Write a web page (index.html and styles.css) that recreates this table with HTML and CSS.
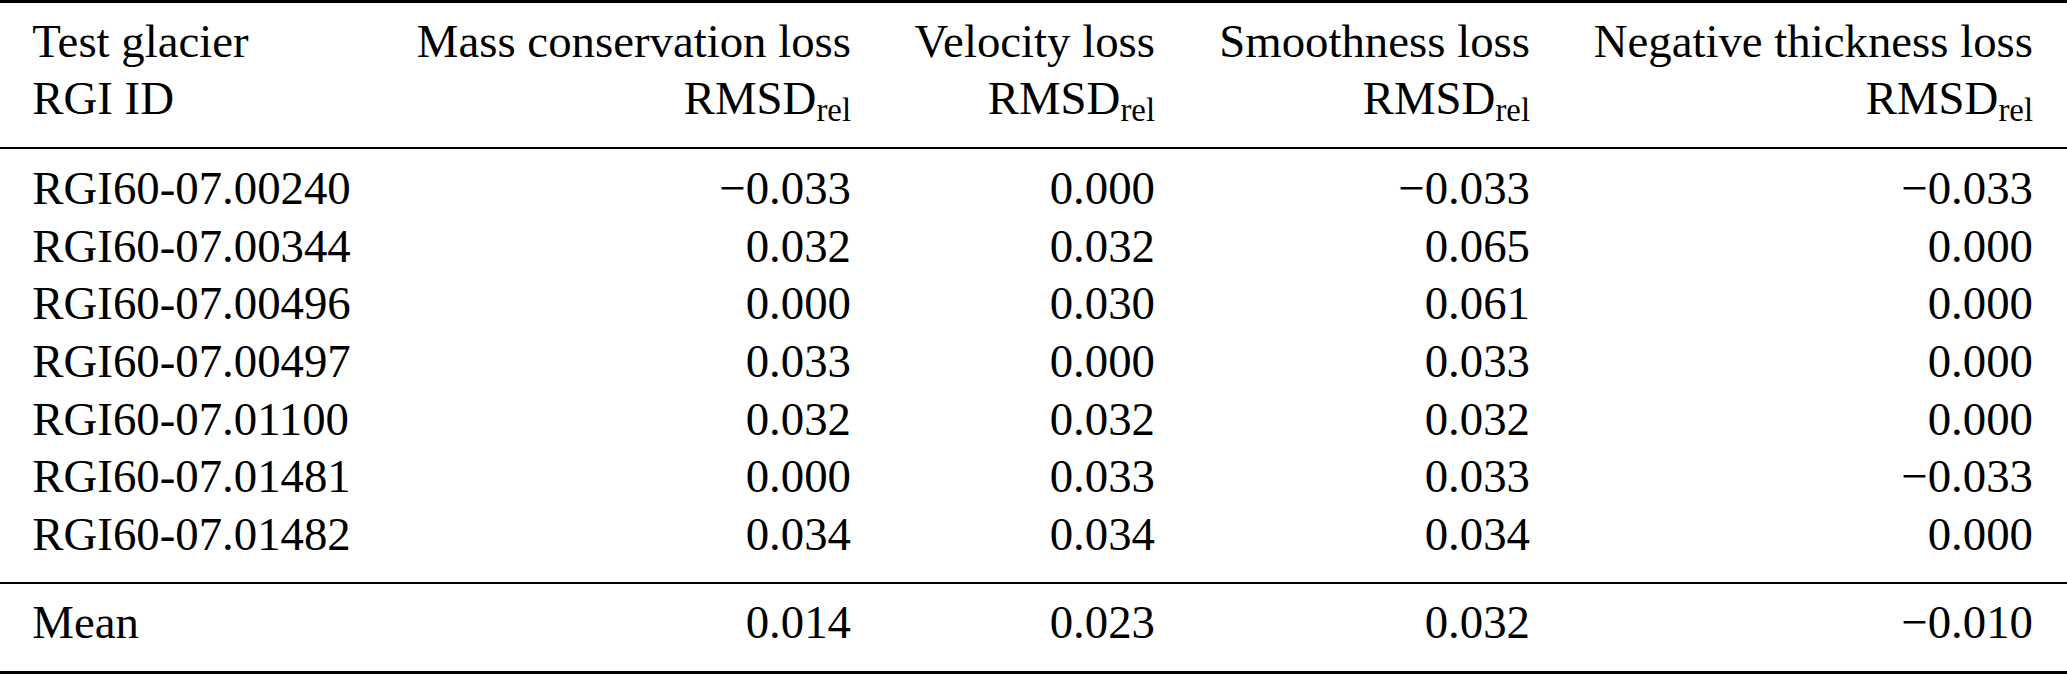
FILE: index.html
```html
<!DOCTYPE html>
<html lang="en">
<head>
<meta charset="utf-8">
<title>Test glacier loss table</title>
<link rel="stylesheet" href="styles.css">
</head>
<body>
<table class="results">
  <colgroup>
    <col class="c-id">
    <col class="c-mass">
    <col class="c-vel">
    <col class="c-smooth">
    <col class="c-neg">
  </colgroup>
  <thead>
    <tr class="head-top">
      <td class="id">Test glacier</td>
      <td>Mass conservation loss</td>
      <td>Velocity loss</td>
      <td>Smoothness loss</td>
      <td class="last">Negative thickness loss</td>
    </tr>
    <tr class="head-bottom">
      <td class="id">RGI ID</td>
      <td>RMSD<sub class="sub">rel</sub></td>
      <td>RMSD<sub class="sub">rel</sub></td>
      <td>RMSD<sub class="sub">rel</sub></td>
      <td class="last">RMSD<sub class="sub">rel</sub></td>
    </tr>
  </thead>
  <tbody class="data">
    <tr><td class="id">RGI60-07.00240</td><td>−0.033</td><td>0.000</td><td>−0.033</td><td class="last">−0.033</td></tr>
    <tr><td class="id">RGI60-07.00344</td><td>0.032</td><td>0.032</td><td>0.065</td><td class="last">0.000</td></tr>
    <tr><td class="id">RGI60-07.00496</td><td>0.000</td><td>0.030</td><td>0.061</td><td class="last">0.000</td></tr>
    <tr><td class="id">RGI60-07.00497</td><td>0.033</td><td>0.000</td><td>0.033</td><td class="last">0.000</td></tr>
    <tr><td class="id">RGI60-07.01100</td><td>0.032</td><td>0.032</td><td>0.032</td><td class="last">0.000</td></tr>
    <tr><td class="id">RGI60-07.01481</td><td>0.000</td><td>0.033</td><td>0.033</td><td class="last">−0.033</td></tr>
    <tr><td class="id">RGI60-07.01482</td><td>0.034</td><td>0.034</td><td>0.034</td><td class="last">0.000</td></tr>
  </tbody>
  <tbody class="mean">
    <tr><td class="id">Mean</td><td>0.014</td><td>0.023</td><td>0.032</td><td class="last">−0.010</td></tr>
  </tbody>
</table>
</body>
</html>
```

FILE: styles.css
```css
html, body {
  margin: 0;
  padding: 0;
  background: #ffffff;
}

body {
  width: 2067px;
  color: #000000;
  font-family: "Liberation Serif", "Times New Roman", serif;
  font-size: 46.8px;
}

.results {
  width: 2067px;
  table-layout: fixed;
  border-collapse: separate;
  border-spacing: 0;
  border-top: 3px solid #000;
  border-bottom: 3px solid #000;
}

.c-id { width: 385px; }
.c-mass { width: 466px; }
.c-vel { width: 304px; }
.c-smooth { width: 375px; }
.c-neg { width: 537px; }

.results td {
  padding: 0;
  line-height: 57.7px;
  text-align: right;
  white-space: nowrap;
  vertical-align: baseline;
}

.results td.id {
  text-align: left;
  padding-left: 32.3px;
}

.results td.last {
  padding-right: 34px;
}

.head-top td {
  padding-top: 9.65px;
}

.head-bottom td {
  padding-bottom: 18.65px;
  border-bottom: 2px solid #000;
}

.data tr:first-child td {
  padding-top: 11.15px;
}

.data tr:last-child td {
  padding-bottom: 17.95px;
  border-bottom: 2px solid #000;
}

.mean td {
  padding-top: 10.65px;
  padding-bottom: 18.65px;
}

.sub {
  font-size: 32.8px;
  line-height: 0;
  vertical-align: -7px;
}
```
